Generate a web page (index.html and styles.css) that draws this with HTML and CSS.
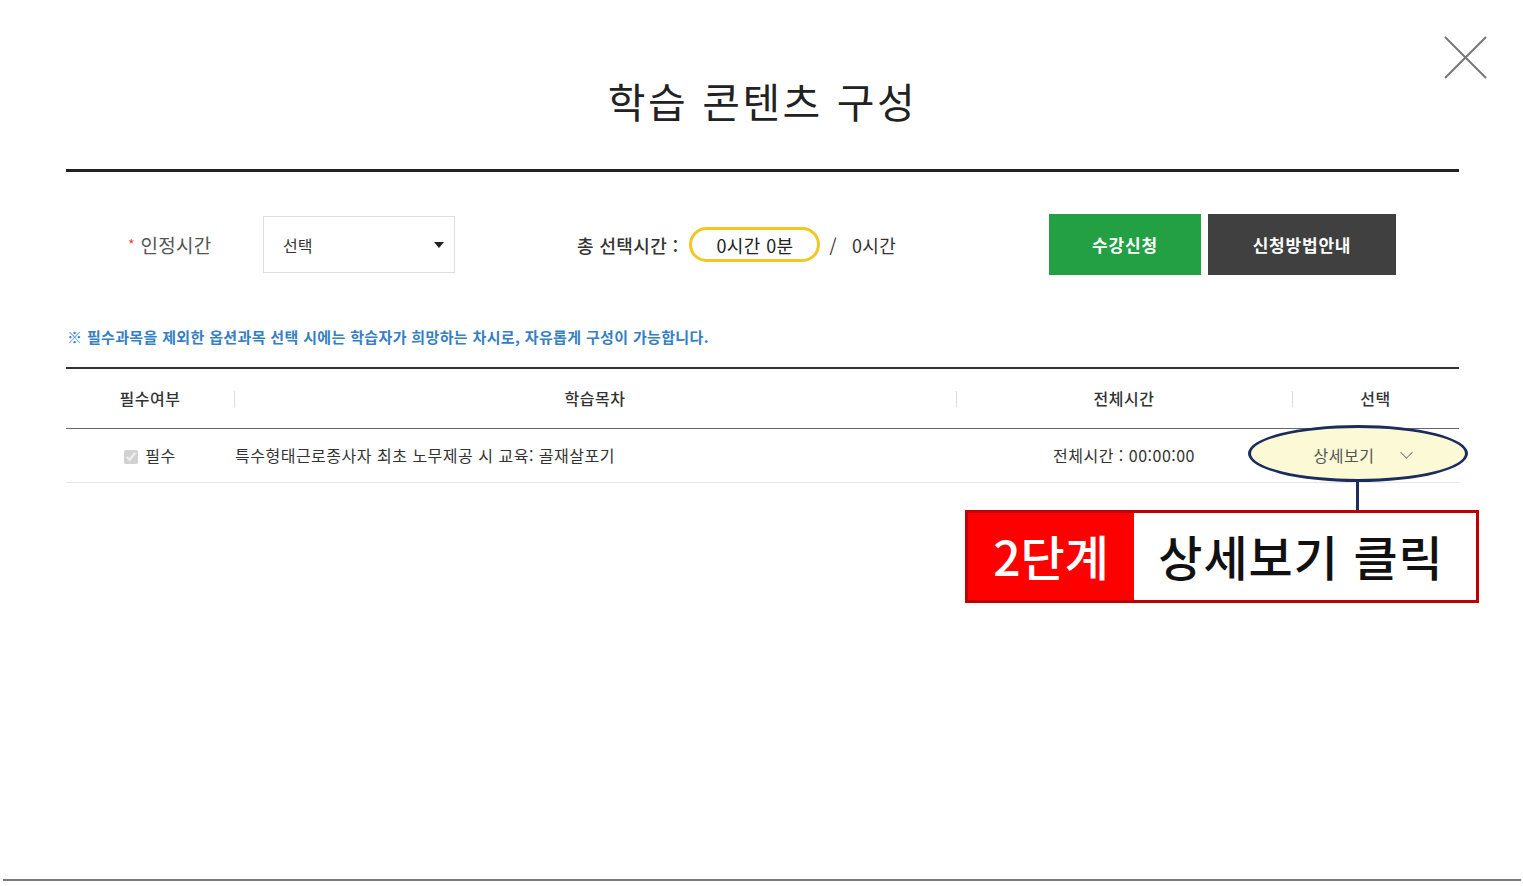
FILE: index.html
```html
<!DOCTYPE html>
<html lang="ko">

<head>
    <meta charset="UTF-8">
    <meta name="viewport" content="width=device-width, initial-scale=1.0">
    <title>학습 콘텐츠 구성</title>
    <link rel="stylesheet" href="styles.css">
</head>

<body>
    <div class="modal">
        <a class="close" href="#" title="닫기">
            <svg width="44" height="44" viewBox="0 0 44 44">
                <path d="M1 1 L42 42 M42 1 L1 42" stroke="#777" stroke-width="2" fill="none" />
            </svg>
        </a>
        <div class="inner">
            <h2 class="title">학습 콘텐츠 구성</h2>

            <div class="option-row">
                <span class="label"><em>*</em> 인정시간</span>
                <div class="select-box">
                    <span>선택</span>
                    <i class="caret"></i>
                </div>
                <div class="total">
                    <span class="total-label">총 선택시간 :</span>
                    <span class="pill">0시간 0분</span>
                    <span class="slash">/</span>
                    <span class="max">0시간</span>
                </div>
                <div class="btns">
                    <a href="#" class="btn btn-green">수강신청</a>
                    <a href="#" class="btn btn-dark">신청방법안내</a>
                </div>
            </div>

            <p class="notice">※ 필수과목을 제외한 옵션과목 선택 시에는 학습자가 희망하는 차시로, 자유롭게 구성이 가능합니다.</p>

            <div class="table-wrap">
                <table class="list">
                    <colgroup>
                        <col style="width:168px">
                        <col style="width:722px">
                        <col style="width:336px">
                        <col>
                    </colgroup>
                    <thead>
                        <tr>
                            <th>필수여부</th>
                            <th><span class="sep"></span>학습목차</th>
                            <th><span class="sep"></span>전체시간</th>
                            <th><span class="sep"></span>선택</th>
                        </tr>
                    </thead>
                    <tbody>
                        <tr>
                            <td class="req"><input type="checkbox" checked disabled> 필수</td>
                            <td class="subject">특수형태근로종사자 최초 노무제공 시 교육: 골재살포기</td>
                            <td>전체시간 : 00:00:00</td>
                            <td><a href="#" class="detail">상세보기 <i class="chev"></i></a></td>
                        </tr>
                    </tbody>
                </table>

                <!-- 안내용 표시 -->
                <div class="guide-ellipse"></div>
                <div class="guide-stem"></div>
                <div class="guide-box">
                    <span class="step">2단계</span>
                    <span class="step-text">상세보기 클릭</span>
                </div>
            </div>
        </div>
    </div>
</body>

</html>
```

FILE: styles.css
```css
* {
    box-sizing: border-box;
}

body {
    margin: 0;
    background: #fff;
    font-family: "Noto Sans CJK KR", "Noto Sans", sans-serif;
    color: #333;
}

a {
    text-decoration: none;
}

.modal {
    position: relative;
    height: 881px;
    margin: 0 2px 0 3px;
    border-bottom: 2px solid #7a7a7a;
}

.close {
    position: absolute;
    top: 36px;
    right: 33px;
    display: block;
    width: 44px;
    height: 44px;
}

.close svg {
    display: block;
}

.inner {
    width: 1393px;
    margin-left: 63px;
}

.title {
    margin: 0;
    padding-top: 76px;
    font-size: 41px;
    line-height: 48px;
    font-weight: 400;
    text-align: center;
    color: #222;
    letter-spacing: 2.5px;
}

.option-row {
    display: flex;
    align-items: center;
    height: 61px;
    margin-top: 45px;
    border-top: 3px solid #222;
    box-sizing: content-box;
    padding-top: 42px;
    padding-left: 62px;
    padding-right: 63px;
}

.label {
    font-size: 19px;
    color: #555;
    width: 135px;
    letter-spacing: 0.3px;
}

.label em {
    font-style: normal;
    color: #e84a4a;
    font-size: 14px;
    vertical-align: 3px;
}

.select-box {
    display: flex;
    align-items: center;
    justify-content: space-between;
    width: 192px;
    height: 57px;
    padding: 0 10px 0 19px;
    border: 1px solid #dedede;
    font-size: 16px;
    color: #333;
}

.caret {
    width: 0;
    height: 0;
    border-style: solid;
    border-width: 6px 5px 0 5px;
    border-color: #222 transparent transparent;
}

.total {
    display: flex;
    align-items: center;
    margin-left: 122px;
    font-size: 18px;
    color: #333;
    letter-spacing: 0.4px;
}

.total-label {
    font-weight: 500;
}

.pill {
    display: inline-flex;
    align-items: center;
    justify-content: center;
    width: 131px;
    height: 35px;
    margin-left: 11px;
    border: 3px solid #f3c623;
    border-radius: 18px;
    color: #222;
}

.slash {
    margin-left: 9px;
}

.max {
    margin-left: 15px;
}

.btns {
    display: flex;
    gap: 7px;
    margin-left: auto;
}

.btn {
    display: flex;
    align-items: center;
    justify-content: center;
    height: 61px;
    font-size: 17px;
    font-weight: 700;
    color: #fff;
    letter-spacing: 0.8px;
}

.btn-green {
    width: 152px;
    background: #22a043;
}

.btn-dark {
    width: 188px;
    background: #404040;
}

.notice {
    margin: 51px 0 0 1px;
    font-size: 15px;
    line-height: 22px;
    font-weight: 700;
    color: #3580c4;
    letter-spacing: 0.35px;
}

.table-wrap {
    position: relative;
    margin-top: 19px;
}

.list {
    width: 100%;
    border-collapse: collapse;
    table-layout: fixed;
    border-top: 2px solid #333;
    letter-spacing: 0.5px;
}

.list th {
    position: relative;
    height: 60px;
    font-size: 16px;
    font-weight: 500;
    color: #333;
    border-bottom: 1px solid #666;
}

.list .sep {
    position: absolute;
    left: 0;
    top: 22px;
    width: 1px;
    height: 16px;
    background: #dcdcdc;
}

.list td {
    height: 54px;
    font-size: 16px;
    text-align: center;
    color: #333;
    border-bottom: 1px solid #e6e6e6;
}

.list td.subject {
    text-align: left;
}

.req input {
    width: 14px;
    height: 14px;
    margin: 0 2px 0 0;
    vertical-align: -2px;
}

.detail {
    position: relative;
    z-index: 2;
    display: inline-flex;
    align-items: center;
    margin-left: -26px;
    margin-top: -3px;
    color: #555;
}

.chev {
    display: inline-block;
    width: 9px;
    height: 9px;
    margin-left: 28px;
    margin-top: -6px;
    border-right: 1px solid #777;
    border-bottom: 1px solid #777;
    transform: rotate(45deg);
}

.guide-ellipse {
    position: absolute;
    z-index: 1;
    left: 1182px;
    top: 58px;
    width: 220px;
    height: 57px;
    border: 3px solid #1c2c5c;
    border-radius: 50%;
    background: #fbf9d6;
}

.guide-stem {
    position: absolute;
    left: 1290px;
    top: 114px;
    width: 3px;
    height: 30px;
    background: #1c2c5c;
}

.guide-box {
    position: absolute;
    left: 899px;
    top: 143px;
    display: flex;
    width: 514px;
    height: 93px;
    border: 3px solid #c00000;
    background: #fff;
    font-size: 48px;
    font-weight: 500;
    line-height: 1;
}

.step {
    display: flex;
    align-items: center;
    justify-content: center;
    width: 166px;
    padding-bottom: 3px;
    background: #ff0000;
    color: #fff;
}

.step-text {
    display: flex;
    align-items: center;
    justify-content: center;
    flex: 1;
    padding-right: 8px;
    padding-bottom: 3px;
    color: #111;
    letter-spacing: 1px;
}
```
